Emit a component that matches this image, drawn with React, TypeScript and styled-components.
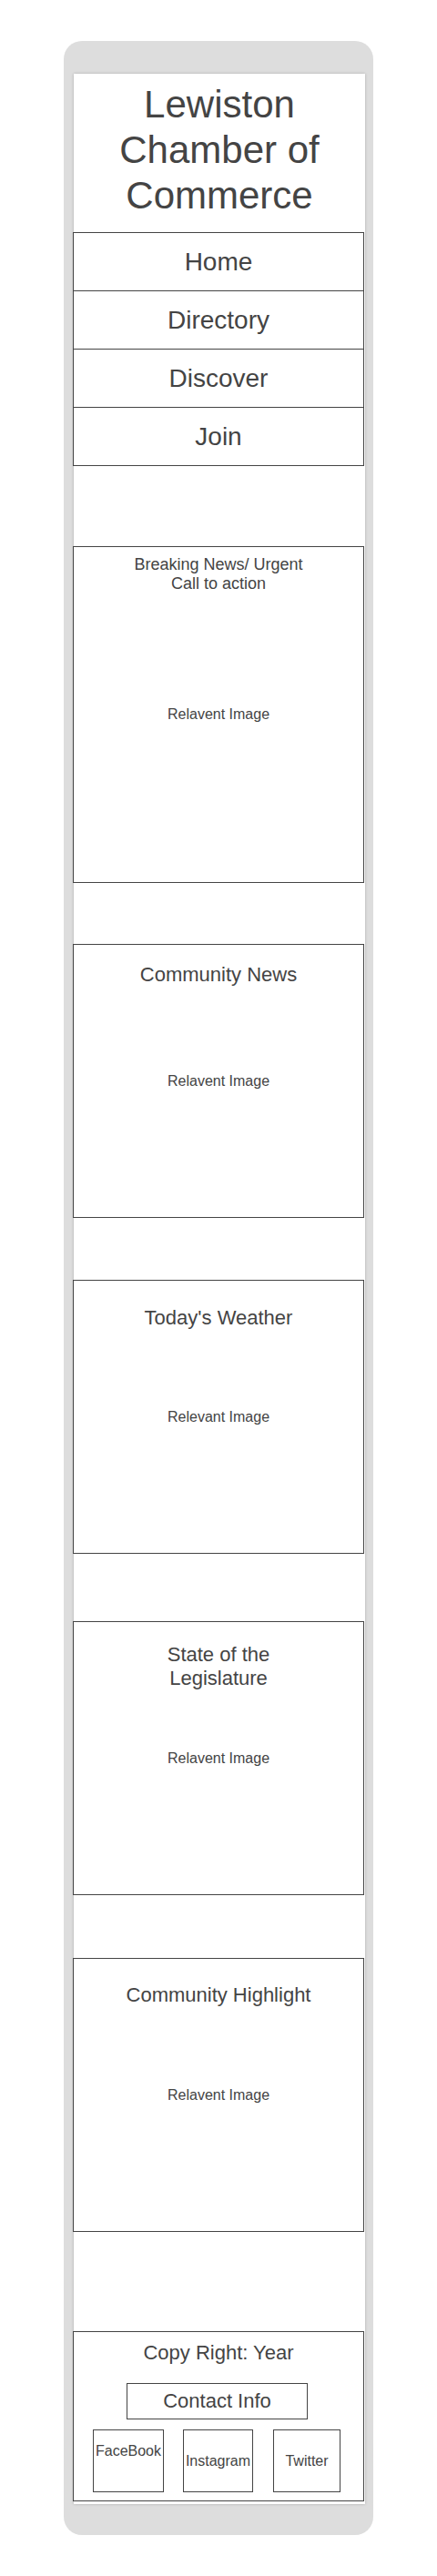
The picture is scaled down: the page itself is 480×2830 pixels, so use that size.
import React from "react";
import styled, { createGlobalStyle } from "styled-components";

const GlobalStyle = createGlobalStyle`
  html, body {
    margin: 0;
    padding: 0;
    background: #ffffff;
  }
  body {
    font-family: "Liberation Sans", Arial, Helvetica, sans-serif;
    color: #444444;
  }
  * { box-sizing: border-box; }
`;

const Frame = styled.div`
  width: 340px;
  margin: 45px 0 0 70px;
  padding: 36px 9px 34px 11px;
  background: #dddddd;
  border-radius: 20px;
`;

const Screen = styled.div`
  width: 320px;
  background: #ffffff;
  display: flex;
  flex-direction: column;
  padding: 9px 0 3px;
  box-shadow: 0 0 3px rgba(0, 0, 0, 0.22);
`;

const Title = styled.h1`
  margin: 0;
  font-weight: 400;
  font-size: 42px;
  line-height: 50px;
  text-align: center;
  color: #444444;
`;

const Nav = styled.nav`
  margin: 15px 0 0 -1px;
  width: 320px;
  display: flex;
  flex-direction: column;
`;

const NavItem = styled.div`
  height: 65px;
  margin-top: -1px;
  border: 1px solid #444444;
  display: flex;
  align-items: center;
  justify-content: center;
  font-size: 28px;
  color: #444444;
  &:first-child { margin-top: 0; }
`;

const Card = styled.section<{ $height: number; $mt: number }>`
  margin: ${(p) => p.$mt}px 0 0 -1px;
  width: 320px;
  height: ${(p) => p.$height}px;
  border: 1px solid #444444;
  display: grid;
  grid-template: 1fr / 1fr;
`;

const CardTitle = styled.h2<{ $small?: boolean; $pt: number }>`
  grid-area: 1 / 1;
  align-self: start;
  margin: 0;
  padding-top: ${(p) => p.$pt}px;
  font-weight: 400;
  font-size: ${(p) => (p.$small ? 18 : 22)}px;
  line-height: ${(p) => (p.$small ? "21px" : "26.4px")};
  text-align: center;
  color: #444444;
`;

const CardLabel = styled.span`
  grid-area: 1 / 1;
  align-self: center;
  justify-self: center;
  font-size: 16px;
  color: #444444;
`;

const Footer = styled.footer`
  margin: 109px 0 0 -1px;
  width: 320px;
  border: 1px solid #444444;
  padding: 10px 0 9px;
  display: flex;
  flex-direction: column;
`;

const Copyright = styled.div`
  font-size: 22px;
  line-height: 26px;
  text-align: center;
  color: #444444;
`;

const ContactBox = styled.div`
  margin: 20px 0 0 58px;
  width: 199px;
  height: 40px;
  border: 1px solid #444444;
  display: flex;
  align-items: center;
  justify-content: center;
  font-size: 22px;
  color: #444444;
`;

const SocialRow = styled.div`
  margin: 11px 0 0 21px;
  display: flex;
  gap: 21px;
`;

const SocialBox = styled.div<{ $w: number; $top?: boolean; $ml?: number }>`
  width: ${(p) => p.$w}px;
  height: 69px;
  margin-left: ${(p) => p.$ml ?? 0}px;
  border: 1px solid #444444;
  display: flex;
  justify-content: center;
  align-items: ${(p) => (p.$top ? "flex-start" : "center")};
  padding-top: ${(p) => (p.$top ? 14 : 0)}px;
  font-size: 16px;
  line-height: 18px;
  color: #444444;
  white-space: nowrap;
`;

type CardData = {
  title: string[];
  small?: boolean;
  pt: number;
  height: number;
  mt: number;
  label: string;
};

const cards: CardData[] = [
  { title: ["Breaking News/ Urgent", "Call to action"], small: true, pt: 9, height: 370, mt: 88, label: "Relavent Image" },
  { title: ["Community News"], pt: 20, height: 301, mt: 67, label: "Relavent Image" },
  { title: ["Today's Weather"], pt: 28, height: 301, mt: 68, label: "Relevant Image" },
  { title: ["State of the", "Legislature"], pt: 23, height: 301, mt: 74, label: "Relavent Image" },
  { title: ["Community Highlight"], pt: 27, height: 301, mt: 69, label: "Relavent Image" },
];

const navItems = ["Home", "Directory", "Discover", "Join"];

export default function App() {
  return (
    <>
      <GlobalStyle />
      <Frame>
        <Screen>
          <Title>
            Lewiston
            <br />
            Chamber of
            <br />
            Commerce
          </Title>
          <Nav>
            {navItems.map((n) => (
              <NavItem key={n}>{n}</NavItem>
            ))}
          </Nav>
          {cards.map((c) => (
            <Card key={c.title.join(" ")} $height={c.height} $mt={c.mt}>
              <CardTitle $small={c.small} $pt={c.pt}>
                {c.title.map((line, i) => (
                  <React.Fragment key={line}>
                    {i > 0 && <br />}
                    {line}
                  </React.Fragment>
                ))}
              </CardTitle>
              <CardLabel>{c.label}</CardLabel>
            </Card>
          ))}
          <Footer>
            <Copyright>Copy Right: Year</Copyright>
            <ContactBox>Contact Info</ContactBox>
            <SocialRow>
              <SocialBox $w={78} $top>
                FaceBook
              </SocialBox>
              <SocialBox $w={77}>Instagram</SocialBox>
              <SocialBox $w={74} $ml={1}>
                Twitter
              </SocialBox>
            </SocialRow>
          </Footer>
        </Screen>
      </Frame>
    </>
  );
}
